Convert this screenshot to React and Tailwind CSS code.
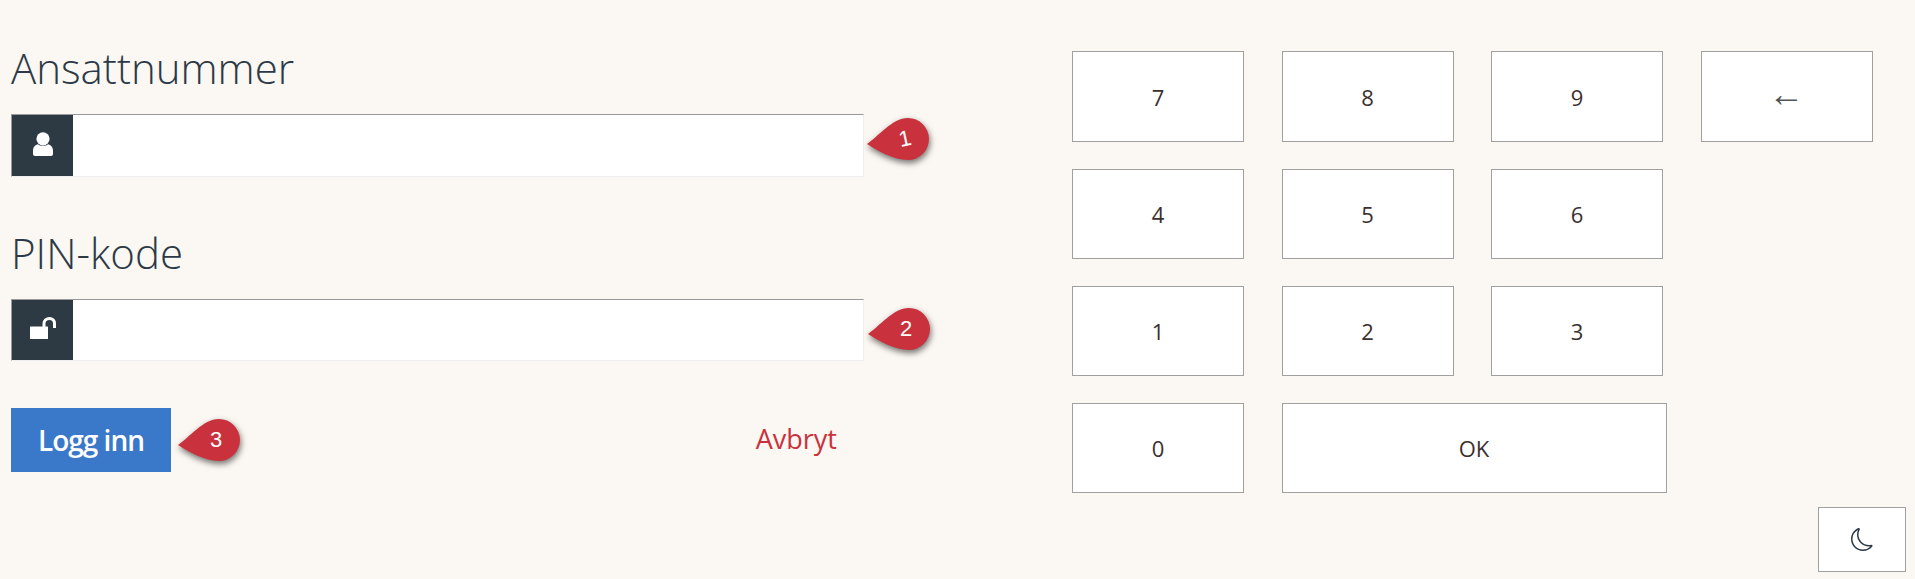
import { BsMoon } from "react-icons/bs";

function Badge({ n, className, numClass = "" }) {
  return (
    <div className={`absolute w-[64px] h-[44px] ${className}`}>
      <svg width="64" height="44" viewBox="0 0 64 44" className="absolute inset-0 overflow-visible drop-shadow-[1px_3px_3px_rgba(0,0,0,0.55)]">
        <path d="M1 27C12 20 26 1 42 1A21 21 0 0 1 42 43C28 43 12 34 1 27Z" fill="#c9323c" />
      </svg>
      <span className={`absolute left-[29px] top-[9px] w-[20px] text-center text-[22px] leading-[26px] text-white font-['Liberation_Sans',sans-serif] ${numClass}`}>{n}</span>
    </div>
  );
}

function UserIcon() {
  return (
    <svg width="20" height="24" viewBox="0 0 20 24" fill="#fff">
      <circle cx="10" cy="6.8" r="6.6" />
      <path d="M0 22V18.5C0 15 2.5 12.6 5 12.2C7 14.2 13 14.2 15 12.2C17.5 12.6 20 15 20 18.5V22C20 23.2 19.2 24 18 24H2C0.8 24 0 23.2 0 22Z" />
    </svg>
  );
}

function UnlockIcon() {
  return (
    <svg width="26" height="22" viewBox="0 0 26 22" fill="#fff">
      <rect x="0" y="9.5" width="18" height="12.5" rx="0.5" />
      <path d="M14 10V6.5C14 3.5 16.5 1.5 19.5 1.5C22.5 1.5 24.5 3.5 24.5 6.5V11" fill="none" stroke="#fff" strokeWidth="3" />
    </svg>
  );
}

function Field({ label, icon, badge }) {
  return (
    <div className="relative">
      <label className="block text-[42px] font-light leading-[52px] text-[#2c3a47]">{label}</label>
      <div className="mt-[20px] flex h-[62.5px] w-[853px] border-t border-l border-t-[#999] border-l-[#999] border-b border-r border-b-[#eee] border-r-[#eee] bg-white">
        <div className="flex w-[61px] items-center justify-center bg-[#2d3a44] pb-[3px]">{icon}</div>
        <input className="flex-1 bg-white outline-none" />
      </div>
      {badge}
    </div>
  );
}

function Key({ children, className = "" }) {
  return (
    <button className={`flex h-[90.2px] items-center justify-center border border-[#a0a0a0] bg-white pt-[1.5px] text-[22px] text-[#3b2f2f] ${className}`}>
      {children}
    </button>
  );
}

export default function App() {
  return (
    <div className="h-[579px] overflow-hidden bg-[#fbf7f2] font-['Open_Sans',sans-serif]">
      <div className="flex items-start">
        {/* login form */}
        <div className="ml-[11px] w-[1061px] pt-[42px]">
          <Field label="Ansattnummer" icon={<UserIcon />} badge={<Badge n="1" className="left-[855px] top-[75px]" numClass="-rotate-12" />} />
          <div className="mt-[50px]">
            <Field label="PIN-kode" icon={<UnlockIcon />} badge={<Badge n="2" className="left-[856px] top-[80px]" />} />
          </div>
          <div className="mt-[46.5px] flex w-[853px] items-center justify-between">
            <div className="relative">
              <button className="h-[64px] w-[160px] bg-[#3a78c9] text-[28px] font-semibold tracking-[-1px] text-white">Logg inn</button>
              <Badge n="3" className="left-[166px] top-[10px]" />
            </div>
            <button className="mr-[27px] text-[27px] text-[#c9323c]">Avbryt</button>
          </div>
        </div>

        {/* keypad */}
        <div className="flex-1">
          <div className="mt-[51.4px] grid w-[801px] grid-cols-[172px_172px_172px_172px] gap-x-[37.5px] gap-y-[27px]">
            <Key>7</Key>
            <Key>8</Key>
            <Key>9</Key>
            <Key className="pb-[8px] text-[36px] text-[#555]">←</Key>
            <Key>4</Key>
            <Key>5</Key>
            <Key>6</Key>
            <div />
            <Key>1</Key>
            <Key>2</Key>
            <Key>3</Key>
            <div />
            <Key>0</Key>
            <Key className="col-span-2 w-[385px]">OK</Key>
          </div>
          <div className="mt-[13.8px] flex justify-end pr-[9px]">
            <button className="flex h-[65px] w-[88px] items-center justify-center border border-[#a0a0a0] bg-white text-[#2c3a47]">
              <BsMoon size={23} />
            </button>
          </div>
        </div>
      </div>
    </div>
  );
}
